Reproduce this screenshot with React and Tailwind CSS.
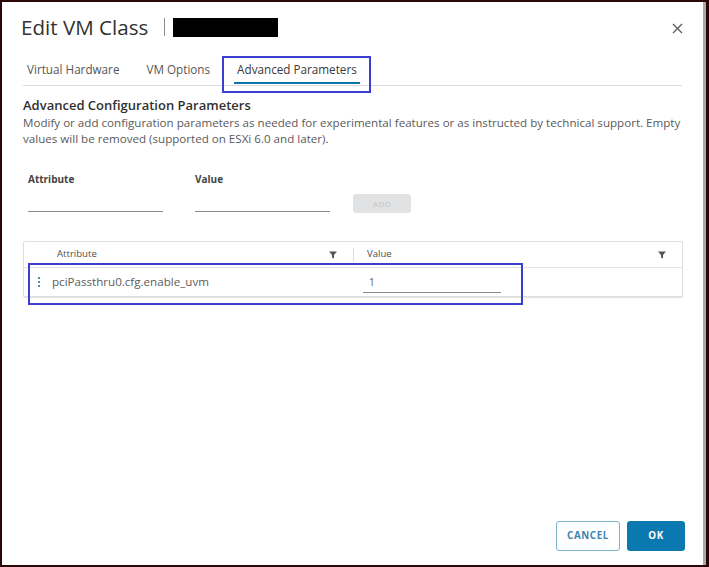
import React from 'react';

const FilterIcon = () => (
  <svg width="8" height="8" viewBox="0 0 8 8" className="fill-[#555]">
    <path d="M0 0.5h8L5 4v3.5L3 6.5V4z" />
  </svg>
);

const App = () => {
  return (
    <div
      className="w-[709px] h-[567px] bg-[#2b0707] pl-[2px] pt-[2px] pr-[3px] pb-[2px]"
      style={{ fontFamily: '"Open Sans", Lato, sans-serif' }}
    >
      <div className="h-full bg-white border-r-[3px] border-[#a9a9a9] flex flex-col text-[#565656]">
        {/* Header */}
        <div className="flex items-center h-[48px] pl-[19px] pr-[20px] pt-[2px]">
          <h1 className="text-[20.6px] text-[#313131] leading-none">Edit VM Class</h1>
          <div className="w-px h-[18px] bg-[#8c8c8c] ml-[16px] mr-[8px]" />
          <div className="w-[105px] h-[19px] bg-black" />
          <button className="ml-auto text-[#666] mt-[2px]">
            <svg width="11" height="11" viewBox="0 0 11 11" className="stroke-[#5f5f5f]" strokeWidth="1.4">
              <path d="M1 1l9 9M10 1l-9 9" />
            </svg>
          </button>
        </div>

        {/* Tabs */}
        <div className="mx-[21px] border-b border-[#dcdcdc] flex items-end h-[36px] text-[11.7px]">
          <div className="ml-[4px] pb-[6px] text-[#565656]">Virtual Hardware</div>
          <div className="ml-[27px] pb-[6px] text-[#565656]">VM Options</div>
          <div className="relative ml-[24px]">
            <div className="absolute -left-[12px] -right-[11px] -top-[5px] -bottom-[8px] border-2 border-[#3a3fd0]" />
            <div className="px-[3px] pb-[3px] mb-[1px] border-b-[2px] border-[#0a76ad] text-[#3a3a3a]">Advanced Parameters</div>
          </div>
        </div>

        {/* Content */}
        <div className="pl-[21px] pr-[20px] pt-[10px]">
          <h2 className="text-[13px] font-semibold text-[#313131] leading-[18px]">Advanced Configuration Parameters</h2>
          <p className="text-[11.6px] leading-[16px] mt-[1px] text-[#5a5a5a]">
            Modify or add configuration parameters as needed for experimental features or as instructed by technical support. Empty values will be removed (supported on ESXi 6.0 and later).
          </p>

          <div className="flex items-end mt-[25px] pl-[5px]">
            <div className="flex flex-col">
              <label className="text-[10px] font-bold text-[#454545] leading-[14px]">Attribute</label>
              <div className="w-[135px] h-[24px] border-b border-[#8a8a8a] mt-[2px]" />
            </div>
            <div className="flex flex-col ml-[32px]">
              <label className="text-[10px] font-bold text-[#454545] leading-[14px]">Value</label>
              <div className="w-[135px] h-[24px] border-b border-[#8a8a8a] mt-[2px]" />
            </div>
            <button className="ml-[23px] mb-[-1px] w-[58px] h-[19px] rounded-[3px] bg-[#e1e2e4] text-[8px] text-[#c3c3c3] tracking-[0.5px]">
              ADD
            </button>
          </div>

          {/* Table */}
          <div className="relative mt-[29px] border border-[#dedede] rounded-[2px] shadow-[0_1px_1px_rgba(0,0,0,0.12)]">
            <div className="flex items-center h-[26px] border-b border-[#e4e4e4] text-[9.6px] text-[#505050]">
              <div className="w-[329px] flex items-center pl-[33px] pr-[16px]">
                <span>Attribute</span>
                <span className="ml-auto mt-[2px]"><FilterIcon /></span>
              </div>
              <div className="w-px h-[14px] bg-[#dcdcdc]" />
              <div className="flex-1 flex items-center pl-[13px] pr-[16px]">
                <span>Value</span>
                <span className="ml-auto mt-[2px]"><FilterIcon /></span>
              </div>
            </div>
            <div className="flex items-center h-[28px] text-[11.6px]">
              <div className="w-[329px] flex items-center pl-[13px]">
                <svg width="4" height="12" viewBox="0 0 4 12" className="fill-[#2f6f98]">
                  <circle cx="2" cy="2" r="1.1" />
                  <circle cx="2" cy="6" r="1.1" />
                  <circle cx="2" cy="10" r="1.1" />
                </svg>
                <span className="ml-[11px] text-[#5c5c5c]">pciPassthru0.cfg.enable_uvm</span>
              </div>
              <div className="flex-1 pl-[10px]">
                <div className="w-[138px] h-[22px] border-b border-[#8a8a8a] pl-[6px] pt-[4px] text-[#5c5c5c] text-[10px]">1</div>
              </div>
            </div>
            <div className="absolute left-[4px] top-[21px] w-[495px] h-[42px] border-2 border-[#3a3fd0]" />
          </div>
        </div>

        {/* Footer */}
        <div className="mt-auto flex justify-end gap-[7px] pr-[18px] pb-[14px]">
          <button className="w-[64px] h-[30px] rounded-[3px] border border-[#7fb3cf] text-[#3d85ad] text-[9.8px] font-bold tracking-[0.6px]">
            CANCEL
          </button>
          <button className="w-[58px] h-[30px] rounded-[3px] bg-[#0a79b0] text-white text-[9.8px] font-bold tracking-[0.6px]">
            OK
          </button>
        </div>
      </div>
    </div>
  );
};

export default App;
